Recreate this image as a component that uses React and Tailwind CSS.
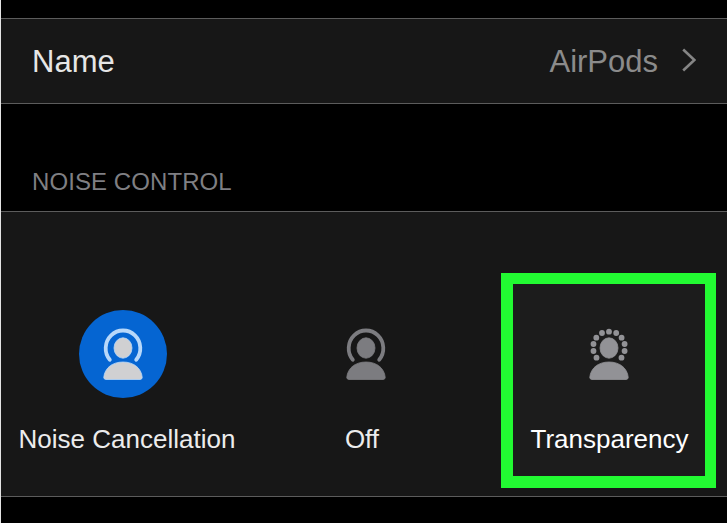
const DOTS = [
  [24, 6.7],
  [17, 8],
  [31.2, 8],
  [11.3, 12.7],
  [36.6, 12.7],
  [8.5, 19],
  [39.6, 19],
  [8.5, 26],
  [39.6, 26],
  [11.5, 32.7],
  [36.5, 32.7],
]

const BODY = 'M4.8 52.3C5.6 43.5 13 37 24 37s18.400 6.500 19.200 15.300Q43.200 54.500 41 54.500H7Q4.800 54.500 4.800 52.300Z'
const BAND = 'M10.800 34.800A17.300 17.800 0 1 1 37.200 34.800'

function PersonIcon({ variant }) {
  const active = variant === 'active'
  const fill = active ? '#d0d0d2' : variant === 'dots' ? '#929296' : '#7c7c80'
  const edge = active ? '#b8d8fa' : fill

  return (
    <svg width="48" height="58" viewBox="0 0 48 58" fill="none">
      {variant === 'dots' ? (
        DOTS.map(([x, y]) => <circle key={`${x}-${y}`} cx={x} cy={y} r="2.9" fill={fill} />)
      ) : (
        <path d={BAND} stroke={edge} strokeWidth="3.8" strokeLinecap="round" />
      )}
      <ellipse cx="24" cy="23" rx="9" ry="10.2" fill={fill} stroke={edge} strokeWidth="0.8" />
      <path d={BODY} fill={fill} stroke={edge} strokeWidth="0.8" />
    </svg>
  )
}

export default function App() {
  return (
    <div className="w-[727px] h-[523px] overflow-hidden bg-black border-l border-[#e4e4e4] font-['Liberation_Sans',Arial,sans-serif]">
      {/* Name row */}
      <div className="mt-[18px] h-[86px] flex items-center justify-between border-y border-[#5c5c5c] bg-[#171717] pl-[31px] pr-[31px] text-[31px] leading-none">
        <span className="text-[#e6e6e6]">Name</span>
        <div className="flex items-center text-[#8b8b8b]">
          <span>AirPods</span>
          <svg className="ml-[24px] -mt-[2px]" width="14" height="24" viewBox="0 0 14 24" fill="none">
            <path d="M1.200 1.500L12.400 12L1.200 22.500" stroke="#858585" strokeWidth="2.600" />
          </svg>
        </div>
      </div>

      {/* Section heading */}
      <div className="h-[107px] flex items-end pl-[31px] pb-[17px]">
        <h2 className="text-[24px] leading-[24px] tracking-[0.08px] text-[#7f7f83]">NOISE CONTROL</h2>
      </div>

      {/* Modes */}
      <div className="h-[286px] flex border-y border-[#5c5c5c] bg-[#171717] text-[26px] leading-[30px] text-[#ececec]">
        <button className="w-[252px] pt-[98px] flex flex-col items-center">
          <span className="mr-[8px] size-[88px] flex items-center justify-center rounded-full bg-[#0565d2]">
            <PersonIcon variant="active" />
          </span>
          <span className="mt-[26px] whitespace-nowrap">Noise Cancellation</span>
        </button>

        <button className="w-[218px] pt-[98px] flex flex-col items-center">
          <span className="ml-[8px] size-[88px] flex items-center justify-center">
            <PersonIcon variant="off" />
          </span>
          <span className="mt-[26px]">Off</span>
        </button>

        <button className="ml-[30px] mt-[61px] size-[215px] pt-[26px] flex flex-col items-center border-[11px] border-l-[12px] border-b-[12px] border-[#22fa32] bg-[#1c1c1c] text-white">
          <span className="size-[88px] flex items-center justify-center">
            <PersonIcon variant="dots" />
          </span>
          <span className="mt-[26px] ml-px">Transparency</span>
        </button>
      </div>
    </div>
  )
}
